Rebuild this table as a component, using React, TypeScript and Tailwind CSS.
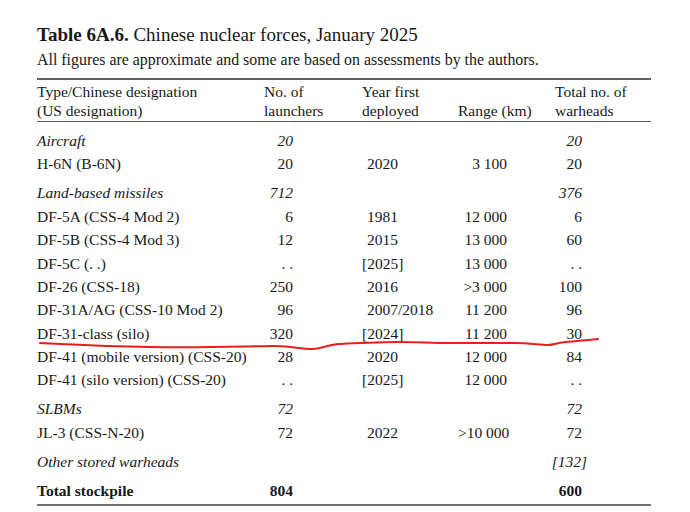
type Row = {
  name: string;
  launchers?: string;
  year?: string;
  range?: string;
  warheads?: string;
  kind?: "group" | "total";
  gap?: boolean;
};

const rows: Row[] = [
  { name: "Aircraft", launchers: "20", warheads: "20", kind: "group" },
  { name: "H-6N (B-6N)", launchers: "20", year: "2020", range: "3 100", warheads: "20" },
  { name: "Land-based missiles", launchers: "712", warheads: "376", kind: "group", gap: true },
  { name: "DF-5A (CSS-4 Mod 2)", launchers: "6", year: "1981", range: "12 000", warheads: "6" },
  { name: "DF-5B (CSS-4 Mod 3)", launchers: "12", year: "2015", range: "13 000", warheads: "60" },
  { name: "DF-5C (. .)", launchers: ". .", year: "[2025]", range: "13 000", warheads: ". ." },
  { name: "DF-26 (CSS-18)", launchers: "250", year: "2016", range: ">3 000", warheads: "100" },
  { name: "DF-31A/AG (CSS-10 Mod 2)", launchers: "96", year: "2007/2018", range: "11 200", warheads: "96" },
  { name: "DF-31-class (silo)", launchers: "320", year: "[2024]", range: "11 200", warheads: "30" },
  { name: "DF-41 (mobile version) (CSS-20)", launchers: "28", year: "2020", range: "12 000", warheads: "84" },
  { name: "DF-41 (silo version) (CSS-20)", launchers: ". .", year: "[2025]", range: "12 000", warheads: ". ." },
  { name: "SLBMs", launchers: "72", warheads: "72", kind: "group", gap: true },
  { name: "JL-3 (CSS-N-20)", launchers: "72", year: "2022", range: ">10 000", warheads: "72" },
  { name: "Other stored warheads", warheads: "[132]", kind: "group", gap: true },
  { name: "Total stockpile", launchers: "804", warheads: "600", kind: "total", gap: true },
];

function Bracketed({ value }: { value?: string }) {
  // brackets hang outside the number column, as in the printed table
  if (!value) return null;
  if (value.startsWith("[") && value.endsWith("]")) {
    return (
      <>
        <span className="-ml-[5px]">[</span>
        {value.slice(1, -1)}
        <span className="-mr-[5px]">]</span>
      </>
    );
  }
  return <>{value}</>;
}

function TableRow({ row }: { row: Row }) {
  const style =
    row.kind === "group" ? "italic" : row.kind === "total" ? "font-bold" : "";
  return (
    <div
      className={`grid grid-cols-[227px_98px_96px_97px_96px] h-[23.4px] items-center ${
        row.gap ? "mt-[5.5px]" : ""
      } ${style}`}
    >
      <div className="whitespace-nowrap">{row.name}</div>
      <div className="w-[29px] text-right whitespace-nowrap">{row.launchers}</div>
      <div className="pl-[5px] whitespace-nowrap">
        <Bracketed value={row.year} />
      </div>
      <div className="w-[49px] text-right whitespace-nowrap">{row.range}</div>
      <div className="w-[27px] text-right whitespace-nowrap">
        <Bracketed value={row.warheads} />
      </div>
    </div>
  );
}

export default function App() {
  return (
    <div className="relative w-[690px] h-[512px] overflow-hidden bg-white text-[#181818] font-['Liberation_Serif',serif]">
      <div className="pl-[37px] pt-[24px] w-[651px]">
        <h1 className="text-[19px] leading-[22px] h-[22px]">
          <span className="font-bold">Table 6A.6.</span> Chinese nuclear forces, January 2025
        </h1>
        <p className="mt-[3px] text-[15.9px] leading-[22px] h-[22px] whitespace-nowrap">
          All figures are approximate and some are based on assessments by the authors.
        </p>

        <div className="mt-[7px] h-[2px] bg-[#606060]" />

        {/* Column headings */}
        <div className="grid grid-cols-[227px_98px_96px_97px_96px] text-[15.5px] leading-[19px] pt-[1.5px] pb-[1px]">
          <div>
            Type/Chinese designation
            <br />
            (US designation)
          </div>
          <div className="whitespace-nowrap">
            No. of
            <br />
            launchers
          </div>
          <div className="whitespace-nowrap">
            Year first
            <br />
            deployed
          </div>
          <div className="whitespace-nowrap">
            <br />
            Range (km)
          </div>
          <div className="whitespace-nowrap">
            Total no. of
            <br />
            warheads
          </div>
        </div>
        <div className="h-[1.5px] bg-[#606060]" />

        {/* Table body */}
        <div className="pt-[7px] text-[15.5px]">
          {rows.map((row) => (
            <TableRow key={row.name} row={row} />
          ))}
        </div>

        <div className="mt-[2px] h-[2px] bg-[#707070]" />
        <p className="mt-[5px] text-[15px] leading-[18px] whitespace-nowrap text-[#444]">
          . . = not available or not applicable; [ ] = uncertain figure; SLBM = submarine-launched ballistic missile.
        </p>
      </div>

      {/* hand-drawn red underline */}
      <svg
        className="absolute left-0 top-0 pointer-events-none"
        width="690"
        height="512"
        viewBox="0 0 690 512"
      >
        <path
          d="M40 343 C60 344 90 346 150 347 S250 346 275 346 C292 346 300 349 312 349 C322 349 326 345 338 344 C360 343 380 342 400 342 C420 342 430 343 450 343 C475 343 495 343 515 343 C530 343 540 345 548 345 C554 345 556 343 565 342 C578 341 588 340 598 339"
          fill="none"
          stroke="#ec1c1c"
          strokeWidth="2"
          strokeLinecap="round"
          strokeLinejoin="round"
        />
      </svg>
    </div>
  );
}
